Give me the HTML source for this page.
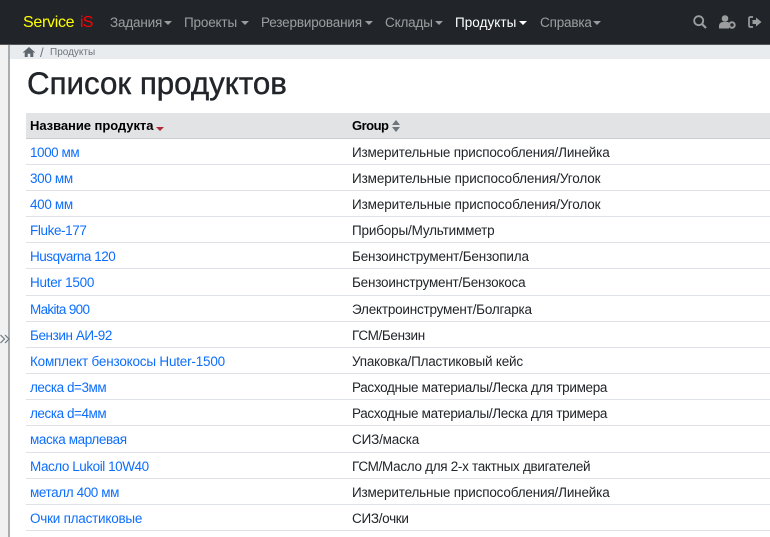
<!DOCTYPE html>
<html lang="ru"><head><meta charset="utf-8"><title>Список продуктов</title>
<style>
html,body{margin:0;padding:0;background:#fff;width:770px;height:537px;overflow:hidden}
body{position:relative;font-family:"Liberation Sans",sans-serif;font-size:14px;color:#212529}
.a{position:absolute;white-space:nowrap}
#nav{position:absolute;left:0;top:0;width:770px;height:44px;background:#212529}
#sep{position:absolute;left:0;top:44px;width:770px;height:1px;background:#555}
.n{position:absolute;top:14px;line-height:17px;font-size:13.500px;letter-spacing:-.17px;color:rgba(255,255,255,.55);white-space:nowrap}
.n i{position:absolute;top:7px;width:0;height:0;border-top:4px solid currentColor;border-left:4px solid transparent;border-right:4px solid transparent}
#side{position:absolute;left:0;top:45px;width:8px;height:492px;background:#f1f1f1;border-right:2px solid #a9adb0}
#bc{position:absolute;left:10px;top:45px;width:760px;height:14px;background:#e9ecef}
.row{position:absolute;left:26px;width:744px;height:26px;border-bottom:1px solid #dee2e6;box-sizing:border-box}
.row a{position:absolute;left:4px;top:6px;line-height:16px;color:#0d6efd;text-decoration:none;white-space:nowrap;font-size:13.500px;letter-spacing:-.17px}
.row span{position:absolute;left:326px;top:6px;line-height:16px;color:#212529;white-space:nowrap;font-size:13.500px;letter-spacing:-.17px}
</style></head><body>
<div id="nav">
<div class="a" style="left:23px;top:13px;font-size:16px;line-height:20px;letter-spacing:-.3px;color:#ff0">Service</div>
<div class="a" style="left:80px;top:13px;font-size:16px;line-height:20px;letter-spacing:-.8px;color:#f00">iS</div>
<div class="n" style="left:110px">Задания<i style="left:54px"></i></div>
<div class="n" style="left:184px">Проекты<i style="left:57px"></i></div>
<div class="n" style="left:261px">Резервирования<i style="left:104px"></i></div>
<div class="n" style="left:385px">Склады<i style="left:50px"></i></div>
<div class="n" style="left:455px;color:#fff;letter-spacing:.05px">Продукты<i style="left:64px"></i></div>
<div class="n" style="left:540px">Справка<i style="left:53px"></i></div>
<svg class="a" style="left:693px;top:15px" width="14" height="14" viewBox="0 0 14 14"><circle cx="5.700" cy="5.700" r="4.500" fill="none" stroke="#9b9d9f" stroke-width="1.800"/><path d="M9 9l4 4" stroke="#9b9d9f" stroke-width="2.200"/></svg>
<svg class="a" style="left:719px;top:15px" width="17" height="14" viewBox="0 0 17 14"><circle cx="6" cy="3.500" r="3.300" fill="#9b9d9f"/><path d="M0 13.500v-2.500c0-2.400 2-4 4-4h4c1 0 1.600.3 2 .6v5.900z" fill="#9b9d9f"/><circle cx="13" cy="10" r="2.700" fill="none" stroke="#9b9d9f" stroke-width="2"/></svg>
<svg class="a" style="left:748px;top:16px" width="14" height="12" viewBox="0 0 14 12"><path d="M5 1H2.500C1.500 1 1 1.600 1 2.500v7C1 10.400 1.500 11 2.500 11H5" fill="none" stroke="#9b9d9f" stroke-width="1.700"/><path d="M8 1.500L13.500 6 8 10.500V8H4.500V4H8z" fill="#9b9d9f"/></svg>
</div>
<div id="sep"></div>
<div id="side"></div>
<svg class="a" style="left:0;top:334px" width="10" height="10" viewBox="0 0 10 10"><path d="M.5 1l4 4-4 4M5 1l4 4-4 4" fill="none" stroke="#6c757d" stroke-width="1.200"/></svg>
<div id="bc"></div>
<svg class="a" style="left:23px;top:47px" width="12" height="10" viewBox="0 0 12 10"><path d="M6 0L0 5.200l.7.700L1.700 5v5h3V6.800h2.600V10h3V5l1 .9.700-.7z" fill="#5f676e"/></svg>
<div class="a" style="left:40px;top:45px;font-size:13px;line-height:15px;color:#6c757d">/</div>
<div class="a" style="left:50px;top:47px;font-size:10px;line-height:12px;color:#6c757d">Продукты</div>
<div class="a" style="left:27px;top:66px;font-size:31.300px;line-height:36px;color:#212529;font-weight:400;-webkit-text-stroke:.4px #212529">Список продуктов</div>

<div class="a" style="left:26px;top:113px;width:744px;height:26px;background:#e2e3e5;border-bottom:1px solid #c9ccd0;box-sizing:border-box"></div>
<div class="a" style="left:30px;top:118px;font-weight:700;line-height:16px;color:#000;font-size:13px;letter-spacing:-.05px">Название продукта</div>
<div class="a" style="left:156px;top:127px;width:0;height:0;border-top:4px solid #b02a37;border-left:4px solid transparent;border-right:4px solid transparent"></div>
<div class="a" style="left:352px;top:118px;font-weight:700;line-height:16px;color:#000;font-size:13px;letter-spacing:-.5px">Group</div>
<div class="a" style="left:392px;top:120px;width:0;height:0;border-bottom:5px solid #6c757d;border-left:4px solid transparent;border-right:4px solid transparent"></div>
<div class="a" style="left:392px;top:127px;width:0;height:0;border-top:5px solid #6c757d;border-left:4px solid transparent;border-right:4px solid transparent"></div>

<div class="row" style="top:139px"><a style="letter-spacing:-.45px">1000 мм</a><span>Измерительные приспособления/Линейка</span></div>
<div class="row" style="top:165px"><a style="letter-spacing:-.34px">300 мм</a><span style="letter-spacing:-.11px">Измерительные приспособления/Уголок</span></div>
<div class="row" style="top:191px"><a style="letter-spacing:-.34px">400 мм</a><span style="letter-spacing:-.11px">Измерительные приспособления/Уголок</span></div>
<div class="row" style="top:217px"><a style="letter-spacing:-.39px">Fluke-177</a><span>Приборы/Мультимметр</span></div>
<div class="row" style="top:243px"><a style="letter-spacing:-.48px">Husqvarna 120</a><span>Бензоинструмент/Бензопила</span></div>
<div class="row" style="top:269px;height:27px"><a style="letter-spacing:-.27px">Huter 1500</a><span style="letter-spacing:-.21px">Бензоинструмент/Бензокоса</span></div>
<div class="row" style="top:296px"><a style="letter-spacing:-.67px">Makita 900</a><span style="letter-spacing:-.21px">Электроинструмент/Болгарка</span></div>
<div class="row" style="top:322px"><a style="letter-spacing:-.42px">Бензин АИ-92</a><span style="letter-spacing:-.35px">ГСМ/Бензин</span></div>
<div class="row" style="top:348px"><a style="letter-spacing:-.2px">Комплект бензокосы Huter-1500</a><span style="letter-spacing:-.21px">Упаковка/Пластиковый кейс</span></div>
<div class="row" style="top:374px"><a style="letter-spacing:-.44px">леска d=3мм</a><span style="letter-spacing:-.33px">Расходные материалы/Леска для тримера</span></div>
<div class="row" style="top:400px"><a style="letter-spacing:-.44px">леска d=4мм</a><span style="letter-spacing:-.33px">Расходные материалы/Леска для тримера</span></div>
<div class="row" style="top:426px;height:27px"><a style="letter-spacing:-.38px">маска марлевая</a><span>СИЗ/маска</span></div>
<div class="row" style="top:453px"><a style="letter-spacing:-.45px">Масло Lukoil 10W40</a><span style="letter-spacing:-.31px">ГСМ/Масло для 2-х тактных двигателей</span></div>
<div class="row" style="top:479px"><a style="letter-spacing:-.4px">металл 400 мм</a><span>Измерительные приспособления/Линейка</span></div>
<div class="row" style="top:505px"><a style="letter-spacing:-.23px">Очки пластиковые</a><span style="letter-spacing:-.3px">СИЗ/очки</span></div>
</body></html>
